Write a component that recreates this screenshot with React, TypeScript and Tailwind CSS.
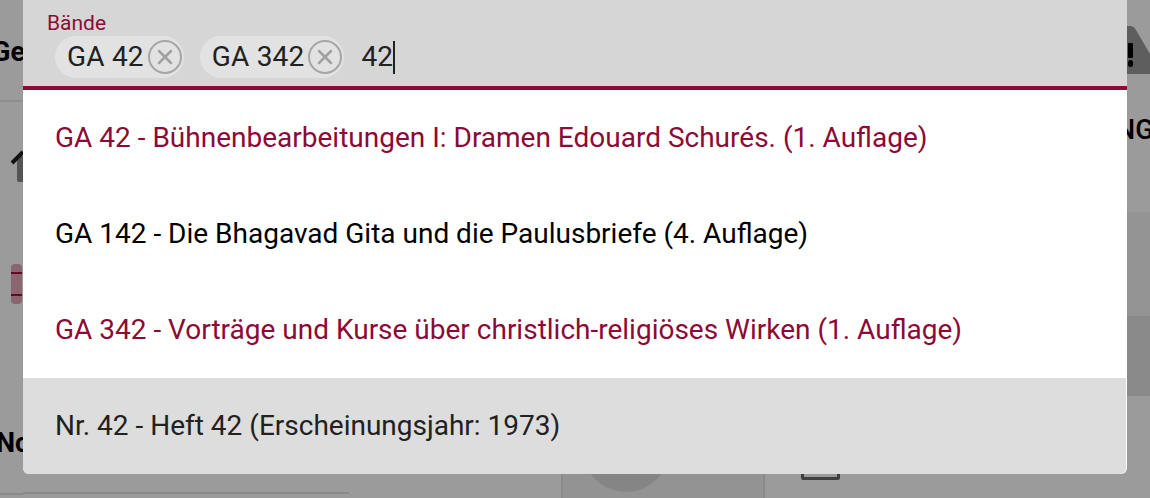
import { X } from "lucide-react";

const options = [
  { label: "GA 42 - Bühnenbearbeitungen I: Dramen Edouard Schurés. (1. Auflage)", selected: true },
  { label: "GA 142 - Die Bhagavad Gita und die Paulusbriefe (4. Auflage)", selected: false },
  { label: "GA 342 - Vorträge und Kurse über christlich-religiöses Wirken (1. Auflage)", selected: true },
];

function Chip({ label }: { label: string }) {
  return (
    <div className="flex h-[42px] items-center rounded-full bg-[#e2e2e2] pl-[12px] pr-[2px] text-[28px] tracking-[0.2px] text-[#212121]">
      <span>{label}</span>
      <span className="ml-[4px] flex h-[34px] w-[34px] items-center justify-center rounded-full border-[2px] border-[#a6a6a6]">
        <X className="h-[24px] w-[24px] text-[#a0a0a0]" strokeWidth={2.5} />
      </span>
    </div>
  );
}

// greyed page behind the dialog, only the edges show
function Backdrop() {
  return (
    <div className="flex h-[498px] w-[1150px] bg-[#9b9b9b] text-black">
      <div className="flex w-[23px] flex-col overflow-hidden">
        <div className="-ml-[8px] mt-[36px] h-[32px] whitespace-nowrap text-[27px] font-bold leading-[32px]">Ge</div>
        <div className="mt-[32px] h-[2px] bg-[#8e8e8e]" />
        <svg className="mt-[48px] shrink-0" width="23" height="34" viewBox="0 0 23 34">
          <path d="M17 6 H23 V32 H19 Q17 32 17 30 Z" fill="#555" />
          <path d="M12 13 L23 2" stroke="#111" strokeWidth="4" fill="none" />
        </svg>
        <div className="ml-[11px] mt-[80px] h-[40px] w-[11px] shrink-0 rounded-[4px] bg-[#8a6670] pt-[8px]">
          <div className="h-[2px] bg-[#5c0a26]" />
          <div className="mt-[20px] h-[2px] bg-[#5c0a26]" />
        </div>
        <div className="-ml-[4px] mt-[123px] h-[32px] whitespace-nowrap text-[27px] font-bold leading-[32px]">No</div>
        <div className="mt-[34px] h-[2px] bg-[#8a8a8a]" />
      </div>

      <div className="flex w-[1104px] flex-col justify-end">
        <div className="flex h-[24px] overflow-hidden">
          <div className="flex w-[538px] flex-col justify-end pb-[4px]">
            <div className="h-[2px] w-[326px] bg-[#8a8a8a]" />
          </div>
          <div className="w-[204px] overflow-hidden border-x-[2px] border-[#8a8a8a] bg-[#939393]">
            <div className="-mt-[68px] ml-[20px] h-[86px] w-[86px] rounded-full bg-[#858585]" />
          </div>
          <div className="ml-[36px] h-[6px] w-[39px] rounded-b-[3px] border-x-[3px] border-b-[3px] border-[#404040]" />
        </div>
      </div>

      <div className="flex w-[23px] flex-col overflow-hidden">
        <div className="relative mt-[26px] h-[48px] shrink-0">
          <svg className="absolute inset-0" width="23" height="48" viewBox="0 0 23 48">
            <path d="M0 48 V0 H3 Q7 0 9 4 L23 28 V48 Z" fill="#5e5e5e" />
          </svg>
          <div className="absolute inset-0 flex flex-col pl-[1px] pt-[17px]">
            <div className="h-[15px] w-[5px] rounded-[1px] bg-black" />
            <div className="mt-[2px] h-[7px] w-[5px] rounded-full bg-black" />
          </div>
        </div>
        <div className="-ml-[11px] mt-[40px] h-[32px] shrink-0 whitespace-nowrap text-[27px] font-medium leading-[32px]">NG</div>
        <div className="mt-[66px] h-[104px] shrink-0 bg-[#949494]" />
        <div className="h-[80px] shrink-0 bg-[#8a8a8a]" />
      </div>
    </div>
  );
}

export default function App() {
  return (
    <div className="relative h-[498px] w-[1150px] overflow-hidden font-['Roboto',sans-serif]">
      <Backdrop />
      <div className="absolute left-[23px] top-0 flex h-[474px] w-[1104px] flex-col overflow-hidden rounded-b-[6px] bg-white">
        <div className="h-[90px] border-b-[4px] border-[#8c0a36] bg-[#d6d6d6] pl-[24px]">
          <div className="pt-[11px] text-[21px] leading-[24px] text-[#8c0a36]">Bände</div>
          <div className="ml-[8px] mt-[1px] flex items-center gap-[16px]">
            <Chip label="GA 42" />
            <Chip label="GA 342" />
            <div className="ml-[1px] flex h-[42px] items-center text-[28px] text-[#212121]">
              42
              <span className="h-[33px] w-[2px] bg-[#212121]" />
            </div>
          </div>
        </div>
        {options.map((o) => (
          <div
            key={o.label}
            className={
              o.selected
                ? "flex h-[96px] items-center pl-[32px] text-[28px] text-[#8c0a36]"
                : "flex h-[96px] items-center pl-[32px] text-[28px] text-black"
            }
          >
            {o.label}
          </div>
        ))}
        <div className="mr-[1px] flex h-[96px] items-center rounded-br-[6px] bg-[#dddddd] pl-[32px] text-[28px] text-[#212121]">
          Nr. 42 - Heft 42 (Erscheinungsjahr: 1973)
        </div>
      </div>
    </div>
  );
}
